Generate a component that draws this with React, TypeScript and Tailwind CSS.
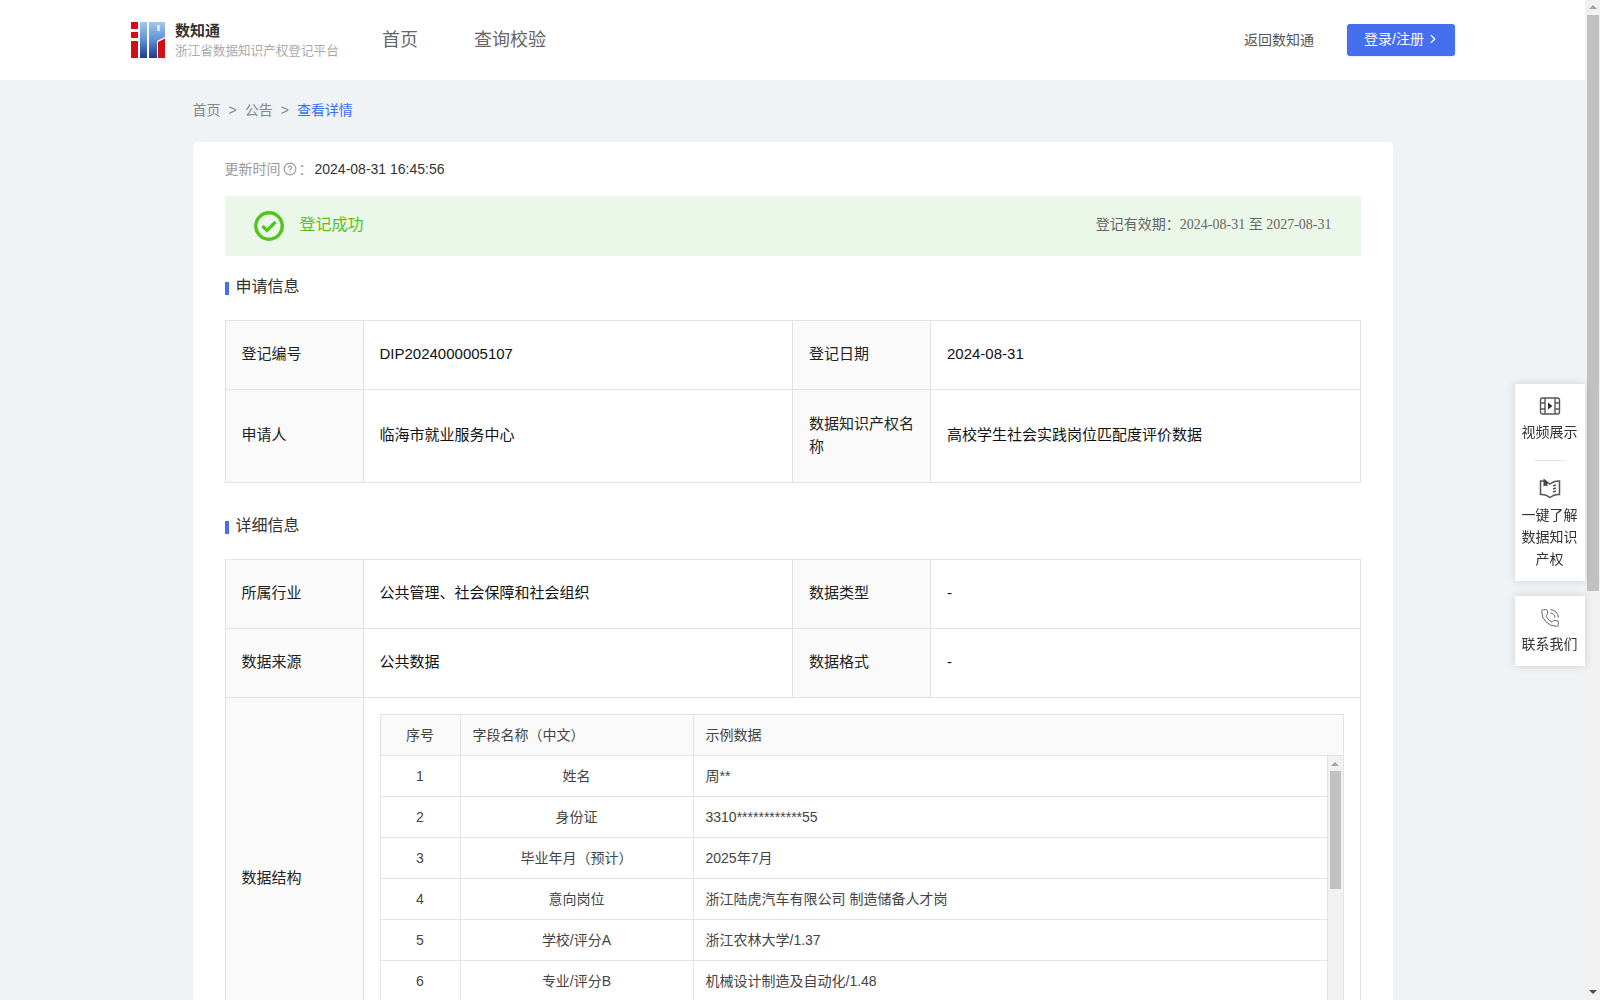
import { ChevronRight, CircleHelp, PhoneCall } from 'lucide-react';

const fields = [
  ['1', '姓名', '周**'],
  ['2', '身份证', '3310************55'],
  ['3', '毕业年月（预计）', '2025年7月'],
  ['4', '意向岗位', '浙江陆虎汽车有限公司 制造储备人才岗'],
  ['5', '学校/评分A', '浙江农林大学/1.37'],
  ['6', '专业/评分B', '机械设计制造及自动化/1.48'],
];

function Logo() {
  return (
    <svg width="34" height="36" viewBox="0 0 34 36" className="shrink-0">
      <defs>
        <linearGradient id="logoBlue" x1="0" y1="0" x2="0" y2="1">
          <stop offset="0" stopColor="#a4c8ee" />
          <stop offset="0.5" stopColor="#5f90d4" />
          <stop offset="1" stopColor="#1f3a8c" />
        </linearGradient>
      </defs>
      <rect x="0" y="0" width="7" height="7" fill="#d40f14" />
      <rect x="0" y="10" width="7" height="6" fill="#d40f14" />
      <rect x="0" y="19" width="7" height="17" fill="#d40f14" />
      <rect x="9" y="0" width="7" height="36" fill="url(#logoBlue)" />
      <path d="M18 0H34V15L26 19V36H18Z" fill="url(#logoBlue)" />
      <rect x="26" y="3" width="3" height="6" fill="#d8e6f6" />
      <path d="M27 20L34 16.5V36H27Z" fill="#d40f14" />
    </svg>
  );
}

function SectionTitle({ title }: { title: string }) {
  return (
    <div className="flex items-center gap-[7px] text-base text-[#333]">
      <span className="w-1 h-[13px] mt-[2px] bg-[#466ff0]" />
      {title}
    </div>
  );
}

function Label({ children }: { children: React.ReactNode }) {
  return <td className="w-[138px] px-4 pb-[3px] bg-[#fafafa] border border-[#e3e3e3] text-[15px] leading-[23px] text-[#222]">{children}</td>;
}

function Value({ children }: { children: React.ReactNode }) {
  return <td className="px-4 pb-[3px] border border-[#e3e3e3] text-[15px] leading-[23px] text-[#111]">{children}</td>;
}

function FieldTable() {
  return (
    <div className="h-[329px] border border-[#e3e3e3] overflow-hidden text-sm text-[#444]">
      <div className="grid grid-cols-[80px_233px_1fr] h-[41px] bg-[#fafafa] border-b border-[#e3e3e3]">
        <div className="flex items-center justify-center border-r border-[#e3e3e3]">序号</div>
        <div className="flex items-center pl-3 border-r border-[#e3e3e3]">字段名称（中文）</div>
        <div className="flex items-center pl-3">示例数据</div>
      </div>
      <div className="flex h-full">
        <div className="flex-1">
          {fields.map((row) => (
            <div key={row[0]} className="grid grid-cols-[80px_233px_1fr] h-[41px] border-b border-[#e3e3e3]">
              <div className="flex items-center justify-center border-r border-[#e3e3e3]">{row[0]}</div>
              <div className="flex items-center justify-center border-r border-[#e3e3e3]">{row[1]}</div>
              <div className="flex items-center pl-3">{row[2]}</div>
            </div>
          ))}
        </div>
        <div className="w-[16px] border-l border-[#e3e3e3] bg-[#f1f1f1] flex flex-col items-center">
          <div className="mt-[6px] w-0 h-0 border-x-[4px] border-x-transparent border-b-[4px] border-b-[#a3a3a3]" />
          <div className="mt-[5px] w-[11px] h-[118px] bg-[#c1c1c1]" />
        </div>
      </div>
    </div>
  );
}

function SidePanel() {
  return (
    <div className="fixed right-[15px] top-[384px] w-[70px] flex flex-col gap-[15px] text-sm leading-[22px] text-[#333] text-center">
      <div className="bg-white shadow-[0_0_8px_rgba(0,0,0,0.15)] h-[197px] pt-3 pr-[1px]">
        <svg width="22" height="20" viewBox="0 0 22 20" fill="none" stroke="#555" strokeWidth="1.4" className="mx-auto">
          <rect x="1.5" y="2" width="19" height="16" rx="2" />
          <path d="M6 2V18M16 2V18M1.5 7H6M1.5 13H6M16 7H20.5M16 13H20.5" />
          <path d="M9 6.5L13.5 10L9 13.5Z" fill="#333" stroke="none" />
        </svg>
        <div className="mt-[5px]">视频展示</div>
        <div className="w-8 h-px bg-[#e4e4e4] mx-auto mt-[17px]" />
        <svg width="22" height="22" viewBox="0 0 22 22" fill="none" stroke="#555" strokeWidth="1.5" className="mx-auto mt-4">
          <path d="M1.5 4C5 3.5 8 4.5 11 7C14 4.5 17 3.5 20.5 4V17.5C17 17 14 18 11 20.5C8 18 5 17 1.5 17.5Z" />
          <path d="M4.5 1.5V9.5L6.5 8.5L8.5 9.5V4.5Z" fill="#444" stroke="none" />
          <path d="M14 9L17 8M14 12L17 11M14 15L17 14" />
        </svg>
        <div className="mt-[5px]">一键了解<br />数据知识<br />产权</div>
      </div>
      <div className="bg-white shadow-[0_0_8px_rgba(0,0,0,0.15)] h-[70px] pt-3 pr-[1px]">
        <PhoneCall size={20} strokeWidth={1.2} className="mx-auto text-[#666]" />
        <div className="mt-[5px]">联系我们</div>
      </div>
    </div>
  );
}

export default function App() {
  return (
    <div className="h-screen flex overflow-hidden bg-[#eff3f6] font-['Liberation_Sans','Noto_Sans_CJK_SC',sans-serif]">
      <div className="flex-1 min-w-0 overflow-hidden">
        <header className="h-20 bg-white pl-[131px] pr-[130px] flex items-center">
          <Logo />
          <div className="ml-[10px] w-[207px] pt-[2px]">
            <div className="text-[15px] font-bold leading-[20px] text-[#333]">数知通</div>
            <div className="text-[12.6px] leading-[20px] text-[#aaa] whitespace-nowrap">浙江省数据知识产权登记平台</div>
          </div>
          <nav className="flex gap-[56px] text-lg text-[#666]">
            <span>首页</span>
            <span>查询校验</span>
          </nav>
          <span className="ml-auto text-sm text-[#555]">返回数知通</span>
          <button className="ml-[33px] w-[108px] h-8 pb-[2px] pl-[2px] flex items-center justify-center gap-[2px] rounded-[3px] bg-[#466ff0] text-sm text-white shadow-[0_1px_3px_rgba(0,0,0,0.1)]">
            登录/注册
            <ChevronRight size={14} />
          </button>
        </header>

        <main className="w-[1200px] mx-auto">
          <div className="h-[62px] pb-[2px] flex items-center gap-[8px] text-sm text-[#888]">
            <span>首页</span>
            <span>&gt;</span>
            <span>公告</span>
            <span>&gt;</span>
            <span className="text-[#3c6ff0]">查看详情</span>
          </div>

          <div className="bg-white rounded-t-[5px] px-8 pt-[17px]">
            <div className="flex items-center h-5 text-sm text-[#999]">
              更新时间
              <CircleHelp size={14} className="ml-[2px]" />
              <span className="w-[18px] pl-[2px]">：</span>
              <span className="text-[#333]">2024-08-31 16:45:56</span>
            </div>

            <div className="mt-[17px] h-[60px] bg-[#ebf7e8] pl-[29px] pr-[29px] flex items-center">
              <svg width="30" height="30" viewBox="0 0 30 30" fill="none" stroke="#52c41a">
                <circle cx="15" cy="15" r="13.2" strokeWidth="3.4" />
                <path d="M8.5 15L13 19.5L21.5 11" strokeWidth="3.2" />
              </svg>
              <span className="ml-4 pb-[2px] text-base text-[#52c41a]">登记成功</span>
              <span className="ml-auto pb-[2px] text-sm text-[#666] font-['Liberation_Serif','Noto_Sans_CJK_SC',serif]">
                登记有效期：2024-08-31 至 2027-08-31
              </span>
            </div>

            <div className="mt-[19px] mb-[21px]">
              <SectionTitle title="申请信息" />
            </div>
            <table className="w-full table-fixed border-collapse">
              <tbody>
                <tr className="h-[69px]">
                  <Label>登记编号</Label>
                  <Value>DIP2024000005107</Value>
                  <Label>登记日期</Label>
                  <Value>2024-08-31</Value>
                </tr>
                <tr className="h-[93px]">
                  <Label>申请人</Label>
                  <Value>临海市就业服务中心</Value>
                  <Label>数据知识产权名称</Label>
                  <Value>高校学生社会实践岗位匹配度评价数据</Value>
                </tr>
              </tbody>
            </table>

            <div className="mt-[31px] mb-[21px]">
              <SectionTitle title="详细信息" />
            </div>
            <table className="w-full table-fixed border-collapse">
              <tbody>
                <tr className="h-[69px]">
                  <Label>所属行业</Label>
                  <Value>公共管理、社会保障和社会组织</Value>
                  <Label>数据类型</Label>
                  <Value>-</Value>
                </tr>
                <tr className="h-[69px]">
                  <Label>数据来源</Label>
                  <Value>公共数据</Value>
                  <Label>数据格式</Label>
                  <Value>-</Value>
                </tr>
                <tr className="h-[361px]">
                  <Label>数据结构</Label>
                  <td colSpan={3} className="p-4 border border-[#e3e3e3]">
                    <FieldTable />
                  </td>
                </tr>
              </tbody>
            </table>
          </div>
        </main>
      </div>

      <div className="w-[15px] h-full bg-[#f1f1f1] flex flex-col items-center">
        <div className="mt-[5px] w-0 h-0 border-x-[4px] border-x-transparent border-b-[4px] border-b-[#a3a3a3]" />
        <div className="mt-[6px] w-[12px] h-[576px] bg-[#c1c1c1]" />
        <div className="mt-auto mb-[6px] w-0 h-0 border-x-[4px] border-x-transparent border-t-[4px] border-t-[#505050]" />
      </div>

      <SidePanel />
    </div>
  );
}
